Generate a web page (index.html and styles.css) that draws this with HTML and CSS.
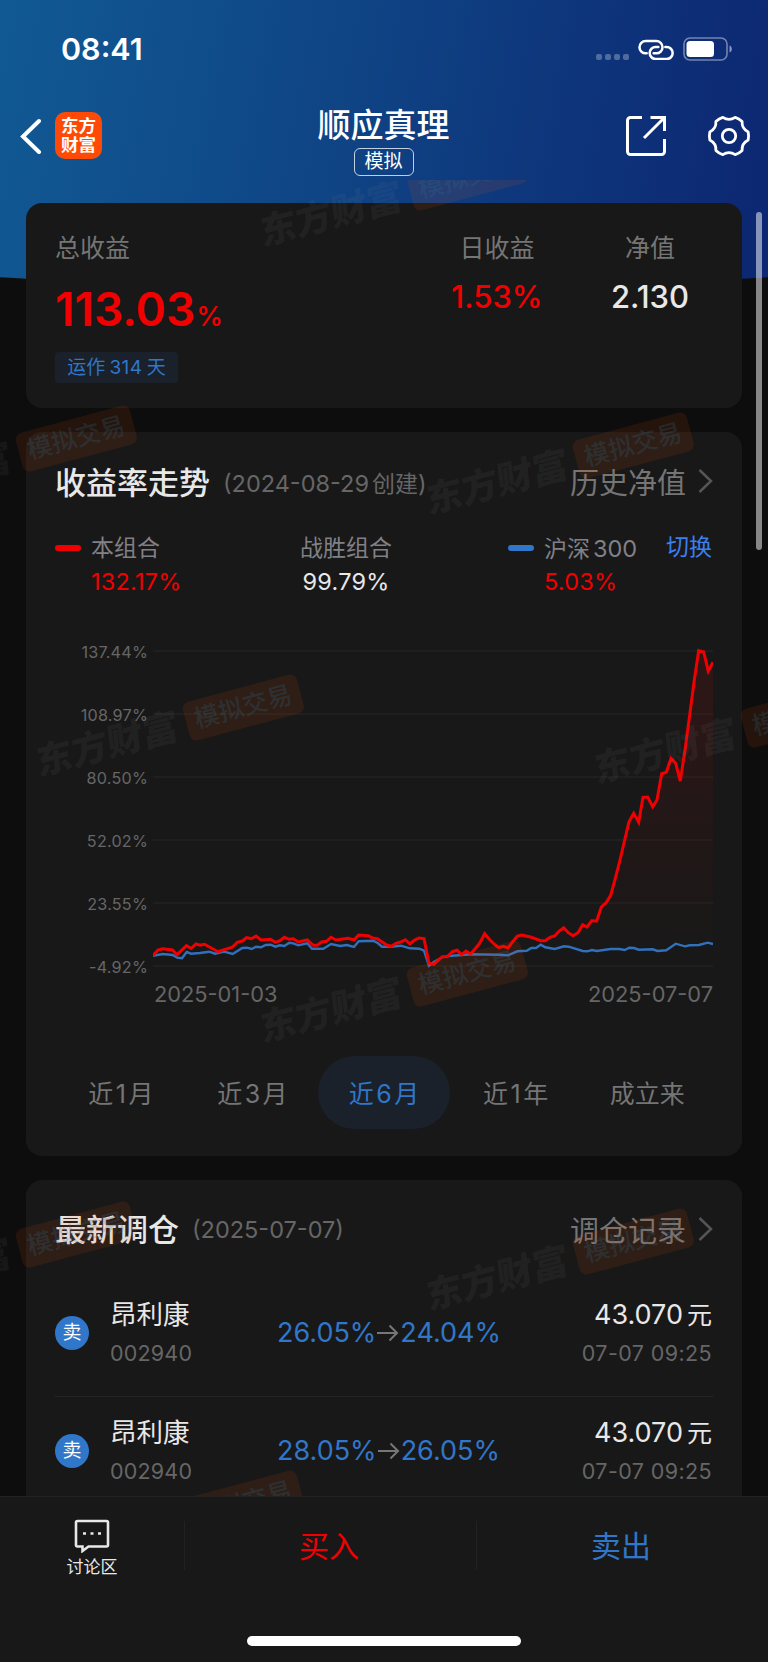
FILE: index.html
```html
<!DOCTYPE html>
<html lang="zh-CN">
<head>
    <meta charset="UTF-8">
    <meta name="viewport" content="width=device-width, initial-scale=1.0">
    <title>顺应真理</title>
    <link rel="stylesheet" href="styles.css">
</head>
<body>

<div class="app">
    <div class="hero-bg"></div>

    <!-- Status bar -->
    <div class="status-bar">
        <span class="clock">08:41</span>
        <div class="status-icons">
            <div class="signal"><i></i><i></i><i></i><i></i></div>
            <svg class="link-icon" width="36" height="22" viewBox="0 0 108 66" fill="none" stroke="#fff" stroke-width="7.500" stroke-linecap="round">
                <path d="M26 46h-3a18 18 0 0 1 0-37h32a18 18 0 0 1 0 37h-8"/>
                <path d="M82 27h4a18 18 0 0 1 0 36h-33a18 18 0 0 1 0-36h8"/>
            </svg>
            <svg class="battery" width="50" height="24" viewBox="0 0 50 24">
                <rect x="1" y="1" width="43" height="22" rx="6" fill="none" stroke="#fff" stroke-opacity=".42" stroke-width="1.6"/>
                <rect x="3.5" y="4" width="27.5" height="16" rx="3.5" fill="#fff"/>
                <path d="M46.5 8.5c3.2 1.2 3.2 5.800 0 7z" fill="#fff" fill-opacity=".5"/>
            </svg>
        </div>
    </div>

    <!-- Navigation -->
    <div class="nav">
        <div class="nav-left">
            <svg width="22" height="36" viewBox="0 0 22 36" fill="none" stroke="#fff" stroke-width="4" stroke-linecap="round" stroke-linejoin="miter">
                <path d="M19 3 3 18.500 19 34"/>
            </svg>
            <div class="logo">东方<br>财富</div>
        </div>
        <div class="nav-title">
            <h1>顺应真理</h1>
            <span class="mode">模拟</span>
        </div>
        <div class="nav-right">
            <svg width="42" height="42" viewBox="0 0 42 42" fill="none" stroke="#fff" stroke-width="3">
                <path d="M17 2.500H5.500a3 3 0 0 0-3 3v31a3 3 0 0 0 3 3h31a3 3 0 0 0 3-3V24"/>
                <path d="M25.500 2.500h14v13.500M39 3 19 23"/>
            </svg>
            <svg width="44" height="44" viewBox="-22 -22 44 44" fill="none" stroke="#fff" stroke-width="2.800" stroke-linejoin="round">
                <path d="M19.200 -4.100Q20 0 19.200 4.100Q12.600 7.500 13.100 14.400Q10 17.500 6.200 18.600Q0 14.500 -6.200 18.600Q-10 17.500 -13.100 14.400Q-12.600 7.500 -19.200 4.100Q-20 0 -19.200 -4.100Q-12.600 -7.500 -13.100 -14.400Q-10 -17.500 -6.200 -18.600Q0 -14.500 6.200 -18.600Q10 -17.500 13.100 -14.400Q12.600 -7.500 19.200 -4.100Z"/>
                <circle r="6.700"/>
            </svg>
        </div>
    </div>

    <div class="content">
        <!-- Summary -->
        <section class="card summary">
            <div class="total">
                <div class="label">总收益</div>
                <div class="total-value">113.03<small>%</small></div>
                <span class="tag">运作<b>314</b>天</span>
            </div>
            <div class="stat stat-day">
                <div class="label">日收益</div>
                <div class="stat-value red">1.53%</div>
            </div>
            <div class="stat stat-net">
                <div class="label">净值</div>
                <div class="stat-value">2.130</div>
            </div>
        </section>

        <!-- Trend -->
        <section class="card trend">
            <div class="card-head">
                <h2>收益率走势</h2>
                <span class="sub">(2024-08-29<em>创建</em>)</span>
                <a class="more">历史净值
                    <svg width="15" height="26" viewBox="0 0 15 26"><path d="M1.500 2 13 13 1.500 24"/></svg>
                </a>
            </div>

            <div class="legend">
                <div class="legend-item">
                    <i class="dash dash-red"></i>
                    <div>
                        <div class="legend-name">本组合</div>
                        <div class="legend-value red">132.17%</div>
                    </div>
                </div>
                <div class="legend-item legend-beat">
                    <div>
                        <div class="legend-name">战胜组合</div>
                        <div class="legend-value">99.79%</div>
                    </div>
                </div>
                <div class="legend-item legend-index">
                    <i class="dash dash-blue"></i>
                    <div>
                        <div class="legend-name">沪深<span>300</span></div>
                        <div class="legend-value red">5.03%</div>
                    </div>
                </div>
                <a class="switch">切换</a>
            </div>

            <div class="chart">
                <div class="y-axis">
                    <span>137.44%</span>
                    <span>108.97%</span>
                    <span>80.50%</span>
                    <span>52.02%</span>
                    <span>23.55%</span>
                    <span>-4.92%</span>
                </div>
                <svg width="560" height="336" viewBox="0 0 560 336">
                    <defs>
                        <linearGradient id="fill" x1="0" y1="0" x2="0" y2="1">
                            <stop offset="0" stop-color="#f00000" stop-opacity=".11"/>
                            <stop offset="1" stop-color="#f00000" stop-opacity="0"/>
                        </linearGradient>
                    </defs>
                    <path class="grid" d="M0 10H560M0 73H560M0 136H560M0 199H560M0 262H560M0 325H560"/>
                    <path fill="url(#fill)" d="M0 325V314L89 300 205 294 271 298 276 322 331 293 355 307 411 287 420 295 443.700 280 448.300 266 453 262 457.700 254.300 462.300 237.300 467 219 471.700 199 476 180.700 480.700 172.300 485.700 181.300 490 156.300 494.700 156 499.700 165.700 504 159 508.700 132.700 513.300 131.300 518 117.300 522.700 122.300 527.300 140 532 109 536.700 74 541.300 39 545.700 9.700 550.700 11 555.300 30 560 21.300V325Z"/>
                    <polyline class="line-index" points="0,314.700 9.700,313 19.700,314 24.300,316.700 29,317.300 33.700,311 38,312.700 47,312 56.300,310.700 62,312.700 71,310.700 79.700,313 89.300,307 94,306.700 98.700,308 103,305.700 108,306.300 112.700,304 117.700,303.700 122.300,305.700 127,304.300 131.300,305 136.300,301.700 140.300,302.300 145.300,304.300 154.300,302.300 159,307.700 170.300,307.700 178,303 187,305 193.700,304 201,306 205.700,300.300 220.300,299.700 225,302.300 229,305.700 238,305.700 247.700,304.700 257,307.300 266.300,307.700 271,309.700 276,324.700 280.700,321 289.300,316.300 296,315 317.700,313.300 345.700,313.700 355,314.300 364.300,310.300 373.700,309.700 378.300,307 383,307 387.700,303.700 392.300,306.300 401.700,308 411,305.300 415.700,305.700 429.700,310 434.300,310.300 439,309 443.700,310 457.700,308 466.300,308 471.700,309 476.300,306.700 481,307 485.700,308.700 499.700,308.300 504.300,310 513.300,309.300 522.700,302.700 532,305.300 536.700,304.300 546,304 554.700,301.700 560,303"/>
                    <polyline class="line-main" points="0,314.500 5,309 9.500,307.700 19.500,309 24,313.700 33.500,304.700 38,307.500 43,303 47,304.300 51.500,303.300 65,310.700 79.300,306.300 84.300,301.300 89.300,300 93.600,296.700 98.600,297.700 103,295 108,299 117.600,298.300 122.300,301.300 127,299.700 131.300,296.300 136.300,298.300 140.300,297.700 145.300,301 154.300,299 160.300,304.300 164.300,304.300 168.600,301 173.600,300.300 178,296.300 183,299 195.300,297.300 201,299 205.600,294 215.300,294.700 219.600,297 224.300,297.700 233.700,304 238.300,305.300 243,302.300 247.700,301 252.300,298.700 257,303 261.700,299 266,297 271,297.700 276,322.300 280.700,323.300 289.300,315.700 294.300,315.700 299.300,310.700 304,309.300 308.700,313.700 313,310 317.700,313 326.700,302.300 331.700,292.700 336.300,298.300 341,303 345.700,306.700 350.300,305.300 355,307 359.700,300.700 364.300,295 369,294 378.300,296.300 387.700,299.700 392.300,299.700 397,296.300 401.700,295 406.300,290 410.700,286.700 415.300,291.700 420,294.700 425,291.700 429.700,283.700 434,286 438.700,279.700 443.700,280 448.300,266 453,262 457.700,254.300 462.300,237.300 467,219 471.700,199 476,180.700 480.700,172.300 485.700,181.300 490,156.300 494.700,156 499.700,165.700 504,159 508.700,132.700 513.300,131.300 518,117.300 522.700,122.300 527.300,140 532,109 536.700,74 541.300,39 545.700,9.700 550.700,11 555.300,30 560,21.300"/>
                </svg>
            </div>
            <div class="x-axis"><span>2025-01-03</span><span>2025-07-07</span></div>

            <div class="tabs">
                <a>近<b>1</b>月</a>
                <a>近<b>3</b>月</a>
                <a class="active">近<b>6</b>月</a>
                <a>近<b>1</b>年</a>
                <a>成立来</a>
            </div>
        </section>

        <!-- Latest trades -->
        <section class="card trades">
            <div class="card-head">
                <h2>最新调仓</h2>
                <span class="sub">(2025-07-07)</span>
                <a class="more">调仓记录
                    <svg width="15" height="26" viewBox="0 0 15 26"><path d="M1.500 2 13 13 1.500 24"/></svg>
                </a>
            </div>
            <div class="trade">
                <span class="side">卖</span>
                <div class="stock">
                    <div class="stock-name">昂利康</div>
                    <div class="minor">002940</div>
                </div>
                <div class="change">
                    <span>26.05%</span>
                    <svg width="22" height="18" viewBox="0 0 22 18"><path d="M0 9H20M12.500 1.500 20 9 12.500 16.500"/></svg>
                    <span>24.04%</span>
                </div>
                <div class="deal">
                    <div class="price">43.070<em>元</em></div>
                    <div class="minor">07-07 09:25</div>
                </div>
            </div>
            <div class="trade">
                <span class="side">卖</span>
                <div class="stock">
                    <div class="stock-name">昂利康</div>
                    <div class="minor">002940</div>
                </div>
                <div class="change">
                    <span>28.05%</span>
                    <svg width="22" height="18" viewBox="0 0 22 18"><path d="M0 9H20M12.500 1.500 20 9 12.500 16.500"/></svg>
                    <span>26.05%</span>
                </div>
                <div class="deal">
                    <div class="price">43.070<em>元</em></div>
                    <div class="minor">07-07 09:25</div>
                </div>
            </div>
        </section>

        <!-- Watermark over the cards -->
        <div class="watermarks">
            <div class="wm wm-1"><span>东方财富</span><b>模拟交易</b></div>
            <div class="wm wm-2"><span>东方财富</span><b>模拟交易</b></div>
            <div class="wm wm-3"><span>东方财富</span><b>模拟交易</b></div>
            <div class="wm wm-4"><span>东方财富</span><b>模拟交易</b></div>
            <div class="wm wm-5"><span>东方财富</span><b>模拟交易</b></div>
            <div class="wm wm-6"><span>东方财富</span><b>模拟交易</b></div>
            <div class="wm wm-7"><span>东方财富</span><b>模拟交易</b></div>
            <div class="wm wm-8"><span>东方财富</span><b>模拟交易</b></div>
            <div class="wm wm-9"><span>东方财富</span><b>模拟交易</b></div>
        </div>
        <div class="scrollbar"></div>
    </div>

    <!-- Bottom bar -->
    <div class="bottom-bar">
        <div class="actions">
            <a class="discuss">
                <svg width="36" height="34" viewBox="0 0 36 34" fill="none" stroke="#e8e8e8" stroke-width="2.600">
                    <path d="M3.500 2h29a1.500 1.500 0 0 1 1.500 1.500v22.500a1.500 1.500 0 0 1-1.500 1.500H14.500l-6 4.500v-4.500H3.500a1.500 1.500 0 0 1-1.500-1.500V3.500A1.500 1.500 0 0 1 3.500 2Z"/>
                    <path d="M9 14.500h3M16.500 14.500h3M24 14.500h3"/>
                </svg>
                讨论区
            </a>
            <a class="buy">买入</a>
            <a class="sell">卖出</a>
        </div>
        <div class="home-indicator"></div>
    </div>
</div>

</body>
</html>
```
FILE: styles.css
```css
* {
    box-sizing: border-box;
}

body {
    margin: 0;
    background-color: #fff;
    font-family: Inter, "Noto Sans CJK SC", sans-serif;
    color: #e8e8e8;
}

h1, h2 {
    margin: 0;
}

em, i {
    font-style: normal;
}

svg {
    display: block;
    flex: none;
}

.app {
    position: relative;
    width: 768px;
    height: 1662px;
    display: flex;
    flex-direction: column;
    background-color: #0d0d0d;
    overflow: hidden;
}

.hero-bg {
    position: absolute;
    left: -116px;
    top: 0;
    width: 1000px;
    height: 286px;
    border-radius: 0 0 50% 50% / 0 0 24px 24px;
    background: linear-gradient(100deg, #115a94 10%, #0f4686 42%, #0d2873 86%);
}

.red {
    color: #f00000;
}

/* Status bar */
.status-bar {
    position: relative;
    height: 98px;
    display: flex;
    justify-content: space-between;
    padding: 0 35px 0 61px;
}

.clock {
    height: 98px;
    line-height: 98px;
    font-size: 30.500px;
    font-weight: 600;
    color: #fff;
}

.status-icons {
    display: flex;
    align-items: center;
    height: 98px;
}

.signal {
    display: flex;
    gap: 3px;
    margin: 15px 9px 0 0;
}

.signal i {
    width: 6px;
    height: 6px;
    border-radius: 2px;
    background-color: rgba(255, 255, 255, 0.28);
}

.link-icon {
    margin-right: 9px;
}

/* Navigation */
.nav {
    position: relative;
    height: 82px;
    display: flex;
    justify-content: space-between;
    padding: 0 17px 0 20px;
}

.nav-left, .nav-right {
    display: flex;
    align-items: center;
    height: 76px;
    width: 160px;
}

.nav-left {
    height: 75px;
}

.nav-right {
    justify-content: flex-end;
    gap: 40px;
}

.logo {
    width: 47px;
    height: 47px;
    margin-left: 13px;
    padding-top: 4px;
    border-radius: 10px;
    background-color: #ff4a05;
    color: #fff;
    font-size: 17.500px;
    font-weight: 700;
    line-height: 19px;
    text-align: center;
}

.nav-title {
    display: flex;
    flex-direction: column;
    align-items: center;
    margin-right: 1px;
    width: 140px;
}

.nav-title h1 {
    height: 50px;
    margin-left: -3px;
    line-height: 55px;
    font-size: 33px;
    font-weight: 500;
    color: #fff;
}

.mode {
    width: 60px;
    height: 28px;
    margin-left: -3px;
    line-height: 26px;
    border: 1.500px solid rgba(255, 255, 255, 0.75);
    border-radius: 6px;
    font-size: 19px;
    color: #fff;
    text-align: center;
}

/* Cards */
.content {
    position: relative;
    flex: 1;
    min-height: 0;
    padding: 23px 26px 0;
    overflow: hidden;
}

.card {
    background-color: #181818;
    border-radius: 16px;
    padding: 0 29px;
    margin-bottom: 24px;
}

.summary {
    height: 205px;
    display: flex;
    padding-top: 27px;
}

.total {
    width: 340px;
}

.label {
    height: 36px;
    line-height: 36px;
    font-size: 25px;
    color: #757575;
}

.total-value {
    height: 60px;
    margin-top: 13px;
    line-height: 60px;
    font-size: 46px;
    font-weight: 600;
    color: #f00000;
}

.total-value small {
    margin-left: 1px;
    font-size: 27px;
    font-weight: 500;
}

.tag {
    display: block;
    width: 123px;
    height: 31px;
    margin-top: 13px;
    line-height: 32px;
    border-radius: 4px;
    background-color: #1a212a;
    color: #3076c9;
    font-size: 19px;
    text-align: center;
}

.tag b {
    margin: 0 4px;
    font-weight: 400;
    letter-spacing: 0.500px;
}

.stat {
    text-align: center;
}

.stat-day {
    width: 204px;
}

.stat-net {
    width: 102px;
}

.stat-value {
    margin-top: 9px;
    height: 44px;
    line-height: 44px;
    font-size: 31px;
    font-weight: 500;
}

.card-head {
    display: flex;
    align-items: center;
    height: 100px;
}

.card-head h2 {
    font-size: 31px;
    font-weight: 500;
    line-height: 40px;
    margin-top: 1px;
}

.sub {
    margin: -1px 0 0 13px;
    font-size: 23.500px;
    color: #666;
    white-space: nowrap;
}

.sub em {
    margin-left: 3px;
    font-size: 23px;
}

.more {
    display: flex;
    align-items: center;
    gap: 12px;
    margin: -2px 0 0 auto;
    font-size: 29px;
    color: #757575;
}

.more path {
    fill: none;
    stroke: #555;
    stroke-width: 2.500;
}

/* Trend card */
.trend {
    height: 724px;
}

.legend {
    display: flex;
    height: 109px;
}

.legend-item {
    display: flex;
    width: 245px;
}

.legend-beat {
    width: 208px;
}

.legend-index {
    width: 158px;
}

.dash {
    width: 26px;
    height: 6px;
    margin: 13px 10px 0 0;
    border-radius: 3px;
}

.dash-red {
    background-color: #f00000;
}

.dash-blue {
    background-color: #3076c9;
}

.legend-name {
    height: 32px;
    line-height: 33px;
    font-size: 23px;
    color: #808086;
    white-space: nowrap;
}

.legend-name span {
    margin-left: 3px;
    font-size: 23.500px;
}

.legend-value {
    height: 34px;
    line-height: 35px;
    font-size: 23.500px;
    letter-spacing: 0.200px;
}

.legend-beat .legend-value {
    text-align: center;
}

.switch {
    line-height: 30px;
    font-size: 23px;
    color: #3b7ff0;
    white-space: nowrap;
}

.chart {
    display: flex;
    height: 336px;
}

.y-axis {
    width: 98px;
    padding-right: 5px;
    text-align: right;
}

.y-axis span {
    display: block;
    height: 63px;
    line-height: 22px;
    font-size: 16.200px;
    color: #666;
    letter-spacing: 0.200px;
}

.grid {
    stroke: #1f1f1f;
    stroke-width: 2;
}

.line-main, .line-index {
    fill: none;
    stroke-width: 3;
    stroke: #f00000;
}

.line-index {
    stroke: #3070bd;
    stroke-width: 2.400;
}

.x-axis {
    display: flex;
    justify-content: space-between;
    padding-left: 99px;
    height: 79px;
    line-height: 34px;
    font-size: 21.800px;
    color: #666;
}

.tabs {
    display: flex;
}

.tabs a {
    flex: 1;
    height: 73px;
    line-height: 76px;
    border-radius: 37px;
    text-align: center;
    font-size: 25px;
    color: #757575;
}

.tabs b {
    margin: 0 2.500px;
    font-weight: 400;
}

.tabs .active {
    background-color: #1a212a;
    color: #3076c9;
}

/* Trades card */
.trades {
    height: 420px;
}

.trade {
    display: flex;
    align-items: center;
    height: 118px;
    padding-bottom: 10px;
    border-bottom: 1px solid #242424;
}

.trades .card-head {
    height: 99px;
}

.side {
    width: 34px;
    height: 34px;
    line-height: 34px;
    border-radius: 50%;
    background-color: #3076c9;
    color: #fff;
    font-size: 19px;
    text-align: center;
}

.stock {
    width: 167px;
    margin: 2px 0 0 21px;
}

.stock-name, .price {
    height: 39px;
    line-height: 39px;
    font-size: 26.500px;
}

.price {
    font-size: 27px;
}

.price em {
    margin-left: 4px;
    font-size: 25px;
}

.minor {
    height: 38px;
    line-height: 38px;
    font-size: 21.500px;
    color: #666;
    letter-spacing: 0.200px;
}

.change {
    display: flex;
    align-items: center;
    font-size: 27px;
    color: #3076c9;
}

.change svg {
    margin: 0 1px;
}

.change path {
    fill: none;
    stroke: #777;
    stroke-width: 2;
}

.deal {
    flex: 1;
    margin-top: 2px;
    padding-right: 1px;
    text-align: right;
    white-space: nowrap;
}

.deal .minor {
    letter-spacing: 0.400px;
}

/* Watermark */
.watermarks {
    position: absolute;
    inset: 0;
    overflow: hidden;
    pointer-events: none;
}

.wm {
    position: absolute;
    display: flex;
    align-items: center;
    gap: 12px;
    height: 40px;
    width: 276px;
    transform: rotate(-15deg);
    white-space: nowrap;
}

.wm span {
    width: 146px;
    font-size: 36.500px;
    font-weight: 900;
    line-height: 40px;
    color: rgba(130, 130, 130, 0.1);
    transform: translateX(3px) skewX(-8deg);
}

.wm b {
    width: 118px;
    height: 40px;
    line-height: 39px;
    border-radius: 7px;
    background-color: rgba(255, 85, 0, 0.1);
    color: rgba(45, 110, 150, 0.24);
    font-size: 25px;
    font-weight: 500;
    text-align: center;
}

.wm-1 { left: 253px; top: -2px; }
.wm-2 { left: -138px; top: 259px; }
.wm-3 { left: 419px; top: 266px; }
.wm-4 { left: 29px; top: 528px; }
.wm-5 { left: 587px; top: 535px; }
.wm-6 { left: 253px; top: 794px; }
.wm-7 { left: -138px; top: 1055px; }
.wm-8 { left: 419px; top: 1062px; }
.wm-9 { left: 29px; top: 1324px; }

.scrollbar {
    position: absolute;
    right: 6px;
    top: 32px;
    width: 6px;
    height: 338px;
    border-radius: 3px;
    background-color: rgba(255, 255, 255, 0.5);
}

/* Bottom bar */
.bottom-bar {
    position: relative;
    height: 166px;
    padding-top: 24px;
    background-color: #181818;
    border-top: 1px solid #222;
}

.actions {
    display: flex;
    height: 49px;
}

.actions a {
    flex: 1;
    padding-right: 3px;
    border-left: 1px solid #222;
    text-align: center;
    font-size: 30px;
    line-height: 50px;
}

.actions .discuss {
    flex: none;
    display: flex;
    flex-direction: column;
    align-items: center;
    width: 184px;
    padding-right: 0;
    margin-top: -2px;
    border: none;
    font-size: 17px;
    line-height: 29px;
}

.actions .buy {
    color: #f00000;
}

.actions .sell {
    color: #3076c9;
}

.home-indicator {
    width: 274px;
    height: 10px;
    margin: 66px auto 0;
    border-radius: 5px;
    background-color: #fff;
}
```
